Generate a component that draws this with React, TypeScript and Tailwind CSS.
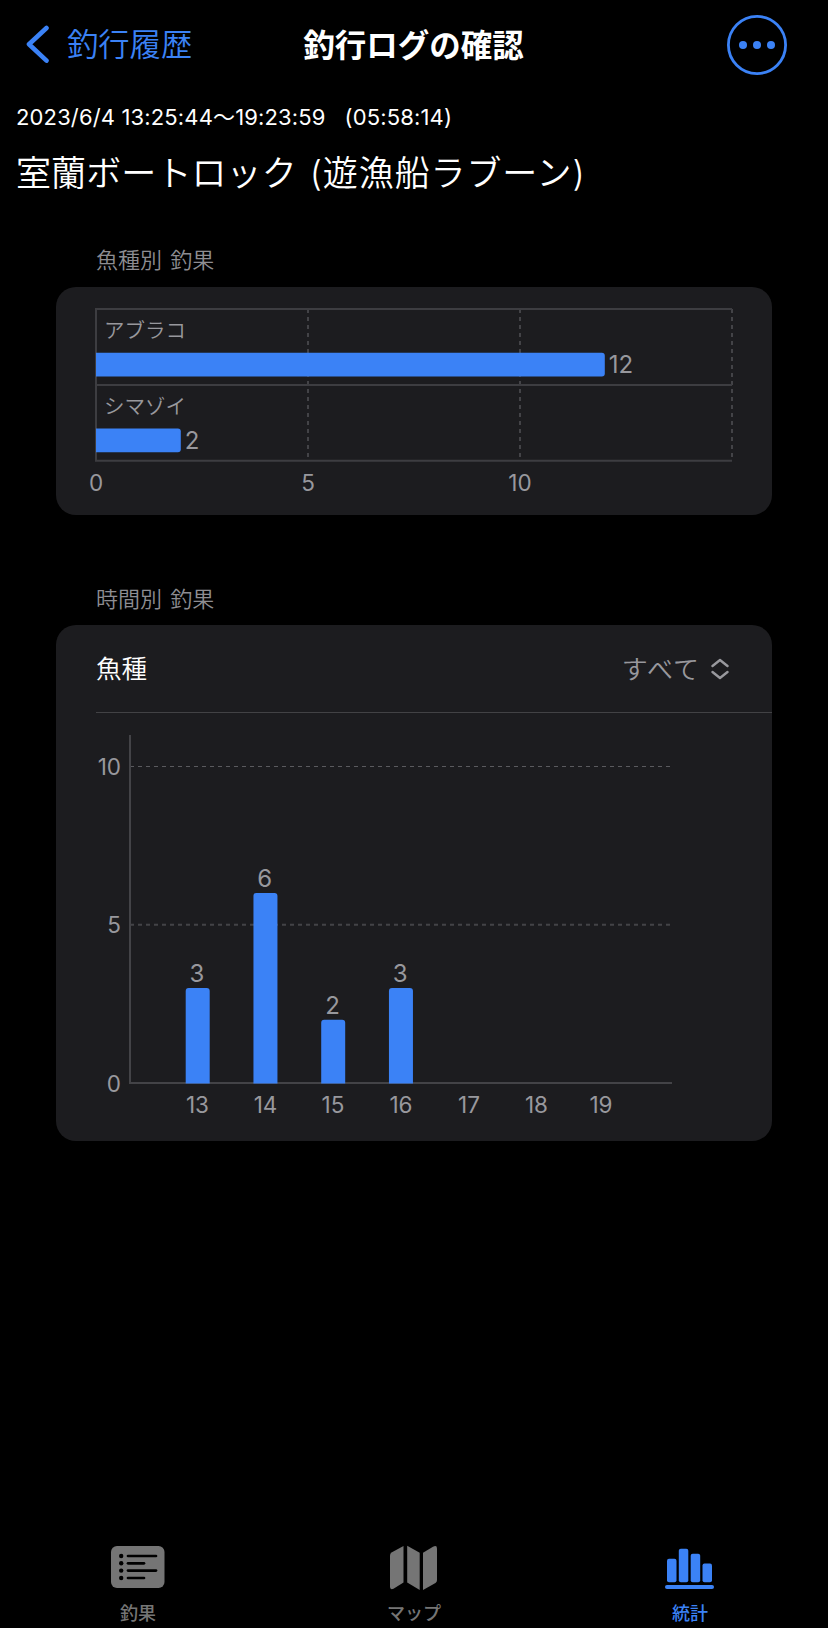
const BLUE = '#3b82f6'

const species = [
  { name: 'アブラコ', count: 12 },
  { name: 'シマゾイ', count: 2 },
]

const hours = [
  { hour: 13, count: 3, labelX: 197.5 },
  { hour: 14, count: 6, labelX: 265.5 },
  { hour: 15, count: 2, labelX: 333 },
  { hour: 16, count: 3, labelX: 401 },
  { hour: 17, count: 0, labelX: 469 },
  { hour: 18, count: 0, labelX: 536.5 },
  { hour: 19, count: 0, labelX: 601 },
]

function SpeciesChart() {
  const unit = 42.4
  const rowHeight = 75.8

  return (
    <svg width="716" height="228" viewBox="56 287 716 228" fill="none">
      {/* Grid */}
      {[5, 10, 15].map((n) => (
        <line key={n} x1={96 + n * unit} x2={96 + n * unit} y1="309" y2="460" stroke="#434347" strokeWidth="2" strokeDasharray="4 4" />
      ))}
      <path d="M732 309H96V460.7H732M96 384.9H732" stroke="#3d3d41" strokeWidth="2" />

      {species.map((s, i) => {
        const y = 309 + i * rowHeight
        const end = 96 + s.count * unit
        return (
          <g key={s.name}>
            <text x="104" y={y + 29} fontSize="20.5" fontWeight="350" fill="#98989d">{s.name}</text>
            <path d={`M96 ${y + 43.8}H${end - 3}q3 0 3 3V${y + 64.4}q0 3 -3 3H96Z`} fill={BLUE} />
            <text x={end + 4} y={y + 64.3} fontSize="24" fill="#98989d">{s.count}</text>
          </g>
        )
      })}

      {[0, 5, 10].map((n) => (
        <text key={n} x={96 + n * unit} y="490.6" fontSize="22.5" textAnchor="middle" fill="#98989d">{n}</text>
      ))}
    </svg>
  )
}

function HourlyChart() {
  const unit = 31.66
  const base = 1083

  return (
    <svg width="716" height="428" viewBox="56 713 716 428" fill="none">
      {/* Grid */}
      <path d="M130 766.5H672" stroke="#5a5a5e" strokeWidth="1" strokeDasharray="4 4" />
      <path d="M130 924.7H672" stroke="#434347" strokeWidth="2" strokeDasharray="4 4" />
      <path d="M130 735V1083H672" stroke="#434347" strokeWidth="2" />
      {[0, 5, 10].map((n) => (
        <text key={n} x="121" y={base - n * unit + 8.7} fontSize="22.5" textAnchor="end" fill="#98989d">{n}</text>
      ))}

      {hours.map((h, i) => {
        const x = 185.7 + i * 67.75
        const top = base - h.count * unit
        return (
          <g key={h.hour}>
            {h.count > 0 && (
              <>
                <path d={`M${x} 1083.5V${top + 3}q0 -3 3 -3h18q3 0 3 3V1083.5Z`} fill={BLUE} />
                <text x={x + 11.3} y={top - 6} fontSize="24" textAnchor="middle" fill="#98989d">{h.count}</text>
              </>
            )}
            <text x={h.labelX} y="1112.6" fontSize="22.5" textAnchor="middle" fill="#98989d">{h.hour}</text>
          </g>
        )
      })}
    </svg>
  )
}

function ListIcon() {
  return (
    <svg width="60" height="48" viewBox="108 1543 60 48">
      <rect x="111" y="1546" width="53.5" height="42" rx="6" fill="#757575" />
      {[1556, 1563.3, 1570.6, 1578].map((y, i) => (
        <g key={y}>
          <circle cx="121.2" cy={y} r="2.2" fill="#000" />
          <path d={`M128 ${y}H${i % 2 ? 144 : 156}`} stroke="#000" strokeWidth="2.7" strokeLinecap="round" />
        </g>
      ))}
    </svg>
  )
}

function MapIcon() {
  return (
    <svg width="60" height="48" viewBox="384 1543 60 48" fill="#757575">
      <path d="M403.5 1546V1582.5L393.5 1588.8Q390 1590 390 1587V1555.5Q390 1553.5 391.5 1552.5Z" />
      <path d="M407.2 1545.8L419.7 1552.8V1590L407.2 1582.5Z" />
      <path d="M423 1590V1552.8L433 1546.8Q437 1544.8 437 1548.5V1580Q437 1582 435.5 1583Z" />
    </svg>
  )
}

function StatsIcon() {
  return (
    <svg width="60" height="48" viewBox="660 1543 60 48" fill={BLUE}>
      <rect x="667" y="1558.7" width="9.5" height="23.6" rx="2" />
      <rect x="678.8" y="1548.8" width="9.5" height="33.5" rx="2" />
      <rect x="690.7" y="1553.8" width="9.5" height="28.5" rx="2" />
      <rect x="702.5" y="1563.5" width="9.5" height="18.8" rx="2" />
      <rect x="665" y="1585" width="49" height="4" rx="2" />
    </svg>
  )
}

export default function App() {
  return (
    <div className="w-[828px] h-[1628px] bg-black text-white flex flex-col overflow-hidden font-['Inter','Noto_Sans_CJK_JP',sans-serif]">
      {/* Nav */}
      <nav className="h-[90px] pl-[26px] pr-[41px] grid grid-cols-[1fr_auto_1fr] items-center">
        <button className="flex items-center gap-[17px] text-[#3b82f6]">
          <svg width="24" height="40" viewBox="0 0 24 40" fill="none" stroke="currentColor" strokeWidth="4.6" strokeLinecap="round" strokeLinejoin="round">
            <path d="M20.5 3L3 19.3L20.5 35.6" />
          </svg>
          <span className="pt-[2px] text-[31.3px] leading-none font-[350]">釣行履歴</span>
        </button>
        <h1 className="pt-[1px] pl-[14px] text-[31.5px] leading-none font-bold whitespace-nowrap">釣行ログの確認</h1>
        <button className="justify-self-end">
          <svg width="60" height="60" viewBox="0 0 60 60" fill={BLUE}>
            <circle cx="30" cy="30" r="28.6" fill="none" stroke={BLUE} strokeWidth="2.8" />
            <circle cx="16" cy="30" r="4" />
            <circle cx="30" cy="30" r="4" />
            <circle cx="44" cy="30" r="4" />
          </svg>
        </button>
      </nav>

      <div className="px-[16px] pt-[11px]">
        <p className="h-8 text-[22px] leading-[33px] tracking-[0.14px] whitespace-pre">2023/6/4 13:25:44〜19:23:59   (05:58:14)</p>
        <h2 className="h-12 mt-4 text-[35px] leading-[48px] font-[350] tracking-[0.1px] whitespace-nowrap [word-spacing:3px]">
          室蘭ボートロック <span className="tracking-[0.9px]">(遊漁船ラブーン)</span>
        </h2>
      </div>

      {/* Catch by species */}
      <section className="mt-[47px] px-14">
        <h3 className="h-8 ml-10 text-[22px] leading-[33px] font-[350] text-[#8d8d92] [word-spacing:2px]">魚種別 釣果</h3>
        <div className="mt-[11px] h-[228px] rounded-[20px] bg-[#1c1c1f] overflow-hidden">
          <SpeciesChart />
        </div>
      </section>

      {/* Catch by hour */}
      <section className="mt-[68px] px-14">
        <h3 className="h-8 ml-10 text-[22px] leading-8 font-[350] text-[#8d8d92] [word-spacing:2px]">時間別 釣果</h3>
        <div className="mt-[10px] h-[516px] rounded-[20px] bg-[#1c1c1f] overflow-hidden">
          <div className="h-[88px] ml-10 pr-[43px] flex items-center justify-between border-b border-[#424245] text-[25.5px] font-[350]">
            <span className="pt-[2px]">魚種</span>
            <span className="flex items-center gap-[11px] text-[#98989d]">
              <span className="pt-[2px] text-[26px] tracking-[1px]">すべて</span>
              <svg width="18" height="22" viewBox="0 0 18 22" fill="none" stroke="currentColor" strokeWidth="2.4" strokeLinecap="round" strokeLinejoin="round">
                <path d="M1.5 8L9 2L16.5 8M1.5 14L9 20L16.5 14" />
              </svg>
            </span>
          </div>
          <HourlyChart />
        </div>
      </section>

      {/* Tab bar */}
      <footer className="mt-auto h-[85px] grid grid-cols-3 text-[18px] leading-6 font-medium text-[#757575]">
        <button className="flex flex-col items-center gap-[11px]">
          <ListIcon />
          <span>釣果</span>
        </button>
        <button className="flex flex-col items-center gap-[11px]">
          <MapIcon />
          <span>マップ</span>
        </button>
        <button className="flex flex-col items-center gap-[11px] text-[#3b82f6]">
          <StatsIcon />
          <span>統計</span>
        </button>
      </footer>
    </div>
  )
}
